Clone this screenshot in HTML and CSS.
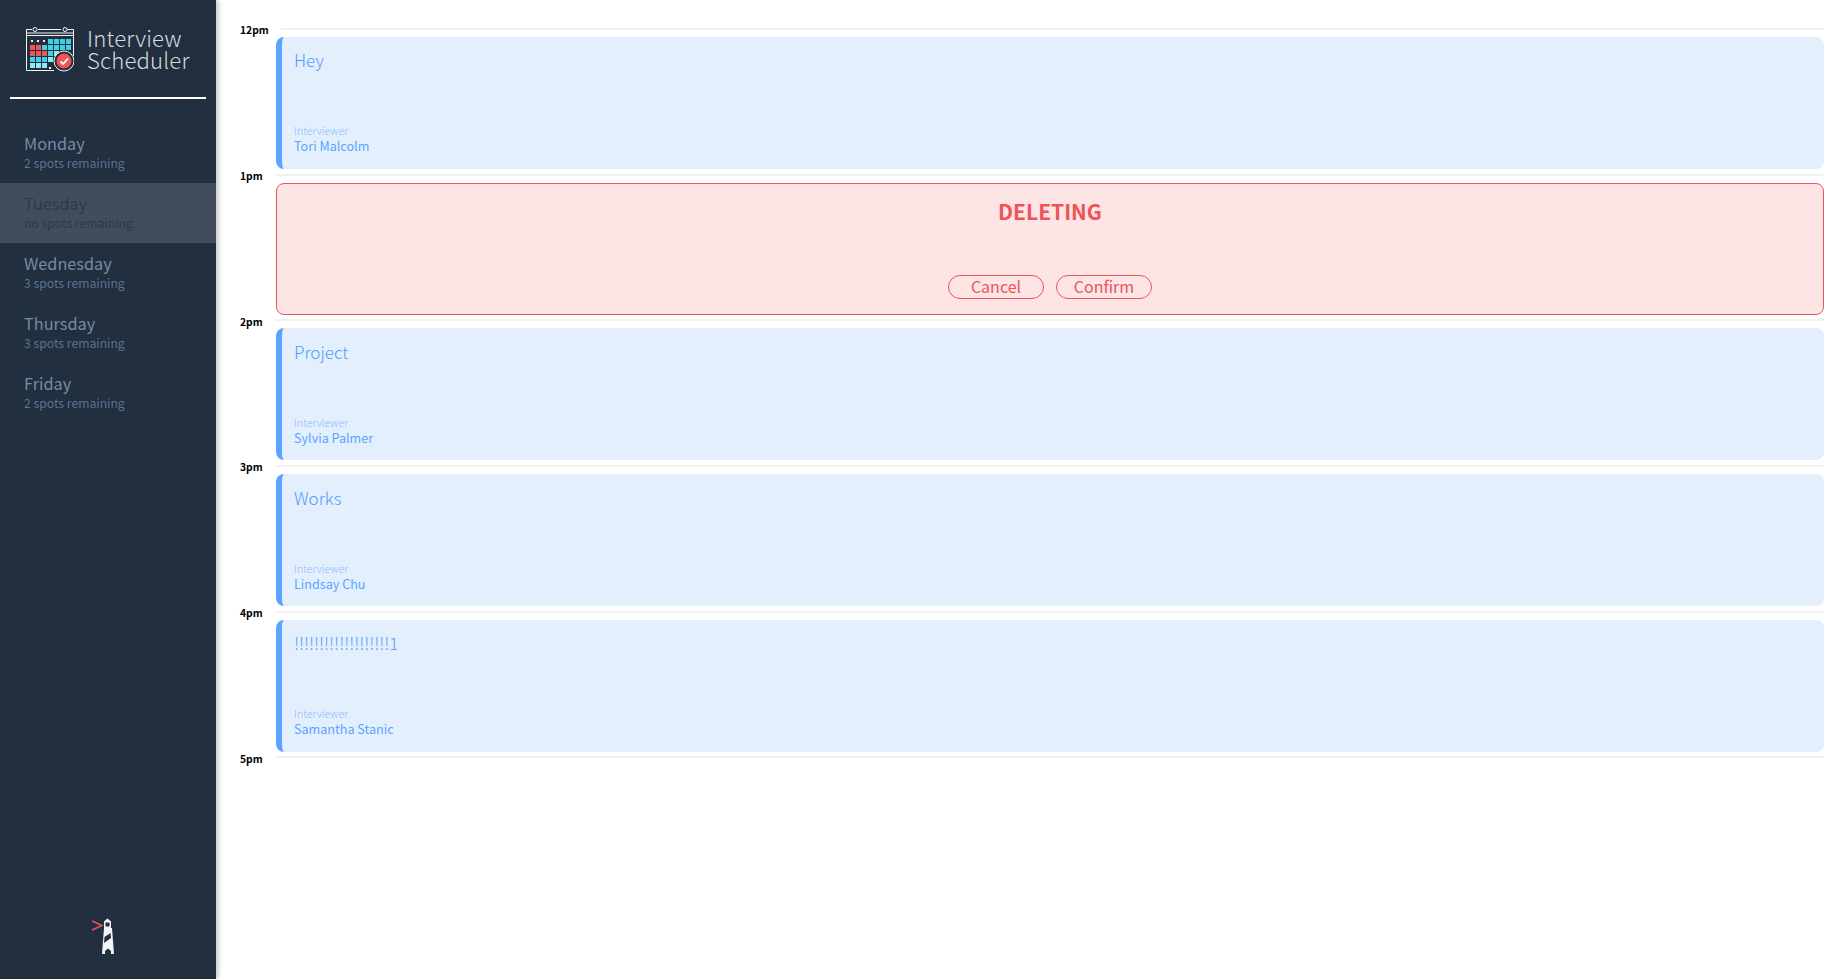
FILE: index.html
```html
<!DOCTYPE html>
<html lang="en">
<head>
<meta charset="UTF-8">
<meta name="viewport" content="width=device-width, initial-scale=1.0">
<title>Interview Scheduler</title>
<link rel="stylesheet" href="styles.css">
</head>
<body>

<div class="layout">
    <aside class="sidebar">
        <div class="brand">
            <svg class="brand-logo" width="48" height="46" viewBox="26 26 48 46">
                <g fill="none" stroke="#f2f5f7" stroke-width="1">
                    <path d="M26.5 70.5V29.5H32M38 29.5H61M67 29.5H73.5V56M26.5 70.5H54"/>
                    <path d="M26.5 35.5H73.5M26.5 33H73.5" stroke-width="1"/>
                    <circle cx="35" cy="29.5" r="2"/>
                    <circle cx="65" cy="29.5" r="2"/>
                </g>
                <g fill="#f2f5f7">
                    <rect x="31" y="40" width="2" height="2"/>
                    <rect x="37" y="40" width="2" height="2"/>
                    <rect x="43" y="40" width="2" height="2"/>
                    <rect x="49" y="67" width="2" height="2"/>
                </g>
                <g fill="#f05454">
                    <rect x="30" y="45" width="5" height="5"/>
                    <rect x="36" y="45" width="5" height="5"/>
                    <rect x="30" y="51" width="5" height="5"/>
                    <rect x="36" y="51" width="5" height="5"/>
                    <rect x="42" y="51" width="5" height="5"/>
                </g>
                <g fill="#3fd0e6">
                    <rect x="48" y="39" width="5" height="5"/>
                    <rect x="54" y="39" width="5" height="5"/>
                    <rect x="60" y="39" width="5" height="5"/>
                    <rect x="66" y="39" width="5" height="5"/>
                    <rect x="42" y="45" width="5" height="5"/>
                    <rect x="48" y="45" width="5" height="5"/>
                    <rect x="54" y="45" width="5" height="5"/>
                    <rect x="60" y="45" width="5" height="5"/>
                    <rect x="66" y="45" width="5" height="5"/>
                    <rect x="48" y="51" width="5" height="5"/>
                    <rect x="30" y="57" width="5" height="5"/>
                    <rect x="36" y="57" width="5" height="5"/>
                    <rect x="42" y="57" width="5" height="5"/>
                </g>
                <g fill="#8fe9f5">
                    <rect x="54" y="51" width="5" height="5"/>
                    <rect x="48" y="57" width="5" height="5"/>
                    <rect x="30" y="63" width="5" height="5"/>
                    <rect x="36" y="63" width="5" height="5"/>
                    <rect x="42" y="63" width="5" height="5"/>
                </g>
                <circle cx="64" cy="61" r="10" fill="#222f3e" stroke="#f2f5f7" stroke-width="1"/>
                <circle cx="64" cy="61" r="7.5" fill="#f05454"/>
                <path d="M60.5 61.5L63 64L68 58.5" fill="none" stroke="#fff" stroke-width="1.8"/>
            </svg>
            <div class="brand-name">Interview<br>Scheduler</div>
        </div>
        <hr class="sidebar-rule">
        <nav class="day-list">
            <div class="day-item">
                <div class="day-name">Monday</div>
                <div class="day-spots">2 spots remaining</div>
            </div>
            <div class="day-item day-item-selected">
                <div class="day-name">Tuesday</div>
                <div class="day-spots">no spots remaining</div>
            </div>
            <div class="day-item">
                <div class="day-name">Wednesday</div>
                <div class="day-spots">3 spots remaining</div>
            </div>
            <div class="day-item">
                <div class="day-name">Thursday</div>
                <div class="day-spots">3 spots remaining</div>
            </div>
            <div class="day-item">
                <div class="day-name">Friday</div>
                <div class="day-spots">2 spots remaining</div>
            </div>
        </nav>
        <svg class="lighthouse" width="26" height="40" viewBox="90 916 26 40">
            <path d="M92 921L102 925.5L92 930" fill="none" stroke="#e8555a" stroke-width="1.5"/>
            <path d="M107.5 918.5L111 921.5V928H112L114 954H102L104 928V921.5Z" fill="#f2f5f7"/>
            <rect x="105.5" y="922.5" width="4" height="4" fill="#222f3e"/>
            <path d="M104.5 937L110.5 933L111 938L104 943Z" fill="#222f3e"/>
            <path d="M105 954V951L108 948.5L111 951V954Z" fill="#222f3e"/>
        </svg>
    </aside>

    <main class="schedule">
        <article class="slot">
            <header class="slot-time"><span class="slot-label">12pm</span><hr class="slot-line"></header>
            <div class="card card-show">
                <h2 class="card-title">Hey</h2>
                <div class="card-small">Interviewer</div>
                <div class="card-person">Tori Malcolm</div>
            </div>
        </article>
        <article class="slot">
            <header class="slot-time"><span class="slot-label">1pm</span><hr class="slot-line"></header>
            <div class="card card-delete">
                <h2 class="delete-title">DELETING</h2>
                <div class="delete-actions">
                    <button class="delete-btn">Cancel</button>
                    <button class="delete-btn">Confirm</button>
                </div>
            </div>
        </article>
        <article class="slot">
            <header class="slot-time"><span class="slot-label">2pm</span><hr class="slot-line"></header>
            <div class="card card-show">
                <h2 class="card-title">Project</h2>
                <div class="card-small">Interviewer</div>
                <div class="card-person">Sylvia Palmer</div>
            </div>
        </article>
        <article class="slot">
            <header class="slot-time"><span class="slot-label">3pm</span><hr class="slot-line"></header>
            <div class="card card-show">
                <h2 class="card-title">Works</h2>
                <div class="card-small">Interviewer</div>
                <div class="card-person">Lindsay Chu</div>
            </div>
        </article>
        <article class="slot">
            <header class="slot-time"><span class="slot-label">4pm</span><hr class="slot-line"></header>
            <div class="card card-show">
                <h2 class="card-title">!!!!!!!!!!!!!!!!!!!1</h2>
                <div class="card-small">Interviewer</div>
                <div class="card-person">Samantha Stanic</div>
            </div>
        </article>
        <article class="slot">
            <header class="slot-time"><span class="slot-label">5pm</span><hr class="slot-line"></header>
        </article>
    </main>
</div>

</body>
</html>
```

FILE: styles.css
```css
* {
    box-sizing: border-box;
}

body {
    margin: 0;
    background-color: #fff;
    font-family: "Noto Sans CJK JP", "Noto Sans", sans-serif;
}

.layout {
    display: flex;
    height: 979px;
    overflow: hidden;
}

.sidebar {
    display: flex;
    flex-direction: column;
    flex: 0 0 216px;
    background-color: #222f3e;
    box-shadow: 2px 0 5px rgba(0, 0, 0, 0.25);
    position: relative;
}

.brand {
    display: flex;
    align-items: flex-start;
    padding: 26px 0 0 26px;
    height: 97px;
}

.brand-name {
    margin: 0 0 0 13px;
    color: #d5dadf;
    font-size: 22.1px;
    font-weight: 300;
    line-height: 22px;
    letter-spacing: 0.2px;
}

.sidebar-rule {
    width: 196px;
    height: 2px;
    margin: 0 0 0 10px;
    border: 0;
    background-color: #fff;
}

.day-list {
    margin-top: 24px;
}

.day-item {
    height: 60px;
    padding: 9px 0 0 24px;
}

.day-name {
    color: #728ca7;
    font-size: 16.3px;
    line-height: 23px;
}

.day-spots {
    color: #5a738f;
    font-size: 12.2px;
    line-height: 17px;
}

.day-item-selected {
    background-color: #414d5a;
}

.day-item-selected .day-name,
.day-item-selected .day-spots {
    color: #2c3a4a;
}

.lighthouse {
    display: block;
    margin: auto 0 23px 90px;
}

.schedule {
    flex: 1;
    padding: 19px 24px 0 24px;
}

.slot {
    height: 145.7px;
}

.slot-time {
    display: flex;
    align-items: center;
    height: 20px;
}

.slot-label {
    margin-top: 2.6px;
    color: #000;
    font-size: 10.3px;
    font-weight: 700;
    line-height: 20px;
}

.slot-line {
    flex: 1;
    height: 2px;
    margin: 0 0 0 12px;
    border: 0;
    background-color: #f1f1f1;
}

.card {
    height: 132px;
    margin: -2px 0 0 36px;
    border-radius: 8px;
}

.card-show {
    padding: 9.45px 0 0 12px;
    background-color: #e3effd;
    border-left: 6px solid #5aa4ff;
}

.card-title {
    margin: 0;
    color: #4e9cff;
    font-size: 17px;
    font-weight: 300;
    line-height: 28px;
}

.card-small {
    margin-top: 50px;
    color: #8fbcfd;
    font-size: 10.6px;
    font-weight: 300;
    line-height: 14px;
}

.card-person {
    color: #5aa4ff;
    font-size: 12.6px;
    line-height: 16px;
}

.card-delete {
    padding-top: 11px;
    background-color: #fde4e5;
    border: 1px solid #ec5457;
    text-align: center;
}

.delete-title {
    margin: 0;
    color: #ef5258;
    font-size: 21px;
    font-weight: 700;
    line-height: 32px;
}

.delete-actions {
    display: flex;
    justify-content: center;
    gap: 12px;
    margin-top: 48px;
}

.delete-btn {
    width: 96px;
    height: 24px;
    padding: 0 0 1px;
    border: 1px solid #ec5457;
    border-radius: 12px;
    background-color: transparent;
    color: #ec5457;
    font-family: inherit;
    font-size: 16px;
    line-height: 20px;
}
```
